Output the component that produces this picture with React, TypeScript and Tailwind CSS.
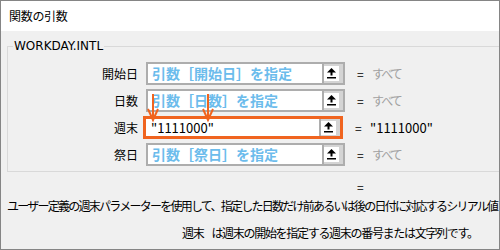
import React from "react";

const JP = "font-['Noto_Sans_CJK_JP','Noto_Sans',sans-serif]";

function UpArrow() {
  return (
    <svg width="9" height="11" viewBox="0 0 9 11">
      <polygon points="4.5,0 0,4.5 9,4.5" fill="#000" />
      <rect x="3.5" y="4" width="2" height="3.5" fill="#000" />
      <rect x="0" y="9" width="9" height="1.5" fill="#000" />
    </svg>
  );
}

function RefButton() {
  return (
    <div className="w-[21px] h-full border-l-2 border-[#adadad] bg-[#d4d4d4] flex items-center pr-[4px]">
      <div className="w-[15px] h-[15px] bg-white flex items-center justify-center">
        <UpArrow />
      </div>
    </div>
  );
}

type Row = {
  label: string;
  placeholder?: string;
  value?: string;
  result: string;
  highlight?: boolean;
};

const rows: Row[] = [
  { label: "開始日", placeholder: "引数［開始日］を指定", result: "すべて" },
  { label: "日数", placeholder: "引数［日数］を指定", result: "すべて" },
  { label: "週末", value: "\"1111000\"", result: "\"1111000\"", highlight: true },
  { label: "祭日", placeholder: "引数［祭日］を指定", result: "すべて" },
];

export default function App() {
  return (
    <div className={`relative w-[500px] h-[250px] overflow-hidden border border-[#858585] bg-[#f0f0f0] ${JP}`}>
      <div className="h-[30px] bg-white flex items-center pl-[8px] text-[12px] tracking-[-0.3px] text-black">
        関数の引数
      </div>

      <fieldset className="mt-[7px] ml-[6px] w-[520px] border border-[#d9d9d9] pt-[8px] pb-[5px]">
        <legend className="ml-[5px] px-[1px] text-[12px] leading-[16px] text-black font-['DejaVu_Sans',sans-serif]">
          WORKDAY.INTL
        </legend>
        <div className="flex flex-col gap-[4px]">
          {rows.map((r) => (
            <div key={r.label} className="flex items-center h-[23px]">
              <div className="w-[130px] text-right text-[12px] text-black">{r.label}</div>
              {r.highlight ? (
                <div className="ml-[5px] w-[200px] h-[23px] border-[3px] border-[#f0641f] bg-white flex items-stretch">
                  <div className="flex-1 flex items-center pl-[5px] text-[13px] text-black">
                    {r.value}
                  </div>
                  <div className="w-[21px] bg-[#d4d4d4] border-l-2 border-[#adadad] flex items-center pr-[3px]">
                    <div className="w-[15px] h-[14px] bg-white flex items-center justify-center">
                      <UpArrow />
                    </div>
                  </div>
                </div>
              ) : (
                <div className="ml-[8px] w-[199px] h-[23px] border-2 border-[#adadad] bg-white flex items-stretch">
                  <div className="flex-1 flex items-center pl-[4px] text-[14px] font-bold text-[#6cbcec]">
                    {r.placeholder}
                  </div>
                  <RefButton />
                </div>
              )}
              <div className="ml-[12px] w-[15px] text-[12px] text-black">=</div>
              <div
                className={
                  r.highlight
                    ? "text-[13px] text-black"
                    : "text-[12px] tracking-[-2px] text-[#a0a0a0]"
                }
              >
                {r.result}
              </div>
            </div>
          ))}
        </div>
      </fieldset>

      <div className="mt-[7px] h-[16px] pl-[356px] text-[12px] leading-[16px] text-black">=</div>
      <div className="mt-[3px] h-[16px] pl-[6px] text-[12px] leading-[16px] tracking-[-1.75px] whitespace-nowrap text-black">
        ユーザー定義の週末パラメーターを使用して、指定した日数だけ前あるいは後の日付に対応するシリアル値
      </div>
      <div className="mt-[11px] h-[16px] pl-[181px] text-[12px] leading-[16px] tracking-[-1.3px] whitespace-nowrap text-black flex">
        <span>週末</span>
        <span className="ml-[8px]">は週末の開始を指定する週末の番号または文字列です。</span>
      </div>

      <svg className="absolute left-0 top-0 pointer-events-none" width="500" height="250">
        <g stroke="#f0641f" strokeWidth="2" fill="none">
          <line x1="152" y1="93" x2="152" y2="119" />
          <polyline points="147,108 152,119 157,108" />
          <line x1="207" y1="93" x2="207" y2="119" />
          <polyline points="202,108 207,119 212,108" />
        </g>
      </svg>
    </div>
  );
}
